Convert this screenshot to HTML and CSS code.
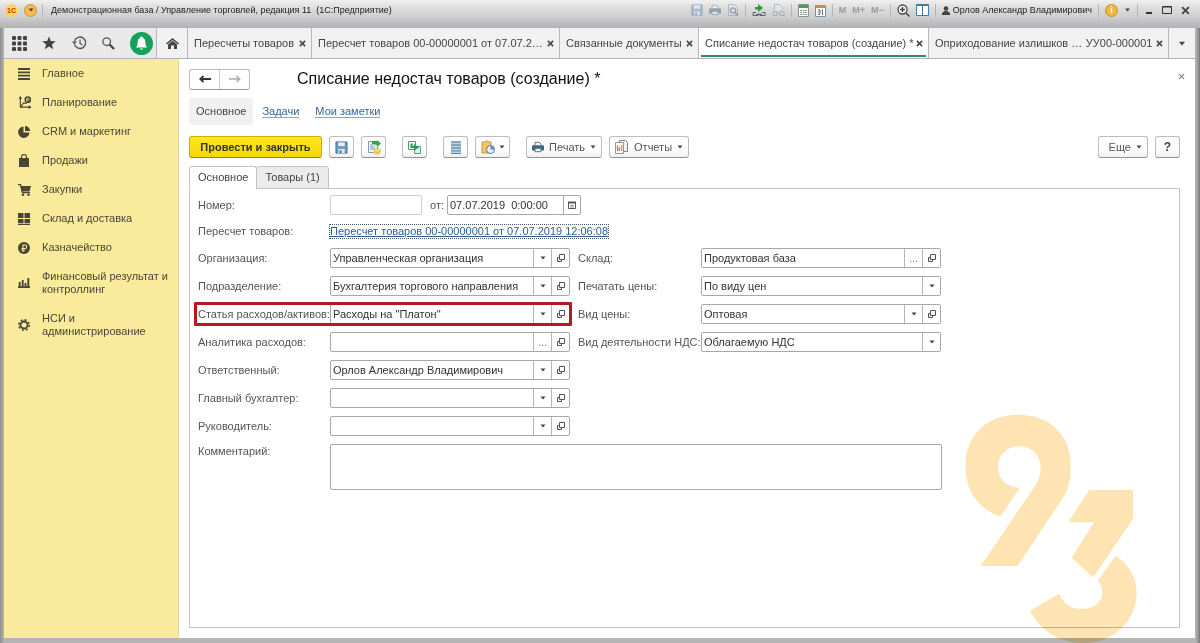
FILE: index.html
```html
<!DOCTYPE html>
<html lang="ru">
<head>
<meta charset="utf-8">
<title>Списание недостач товаров (создание)</title>
<link rel="stylesheet" href="styles.css">
</head>
<body>
<svg class="defs" width="0" height="0" aria-hidden="true">
  <symbol id="i-open" viewBox="0 0 10 10"><path d="M3.500 1.500h5v5h-5zM3.500 4.500h-2v4h4v-2" fill="none" stroke="#555"/></symbol>
  <symbol id="i-down" viewBox="0 0 6 4"><path d="M0.500 0.500h5L3 3.500z" fill="#444"/></symbol>
  <symbol id="i-x" viewBox="0 0 8 8"><path d="M1 1l6 6M7 1l-6 6" stroke="#444" stroke-width="1.700" fill="none"/></symbol>
  <symbol id="i-disk" viewBox="0 0 14 14"><path d="M1 1h12v12H1z" fill="#6f97bd" stroke="#47709a"/><path d="M3.500 1.500h7v4h-7z" fill="#e9f1f8"/><path d="M3.500 8.500h7V13h-7z" fill="#dbe7f1"/><path d="M5 10h2v3H5z" fill="#47709a"/></symbol>
  <symbol id="i-print" viewBox="0 0 14 14"><path d="M3.500 5V1.500h5l2 2V5" fill="#fff" stroke="#41677f"/><path d="M1 5h12a1 1 0 0 1 1 1v5H0V6a1 1 0 0 1 1-1z" fill="#41677f"/><path d="M3.500 8.500h7v4h-7z" fill="#e8f1f6" stroke="#41677f"/></symbol>
</svg>
<div class="window">
  <header class="titlebar">
    <span class="logo">1С</span>
    <button class="round" aria-label="Меню"><svg width="6" height="4"><use href="#i-down"/></svg></button>
    <span class="vline"></span>
    <span class="caption">Демонстрационная база / Управление торговлей, редакция 11&nbsp; (1С:Предприятие)</span>
    <div class="systools">
      <button class="dim" aria-label="Сохранить"><svg width="12" height="12"><use href="#i-disk"/></svg></button>
      <button class="dim" aria-label="Печать"><svg width="12" height="12"><use href="#i-print"/></svg></button>
      <button class="dim" aria-label="Просмотр"><svg width="12" height="12" viewBox="0 0 12 12"><path d="M1.500.5h6l3 3v8h-9z" fill="#e4eaf0" stroke="#7890a4"/><circle cx="6" cy="6.500" r="2.500" fill="none" stroke="#4c687e" stroke-width="1.500"/><path d="M8 8.500l3 3" stroke="#4c687e" stroke-width="2"/></svg></button>
      <span class="vline"></span>
      <button aria-label="Получить ссылку"><svg width="14" height="13" viewBox="0 0 14 13"><path d="M5 3h3V0l5 4-5 4V5.500H5z" fill="#2f9a32" transform="translate(-2 0)"/><path d="M1 8.500h3M10 8.500h3M1 8.500v3h5v-2M13 8.500v3H8v-2M4 10.500h6" fill="none" stroke="#57656f"/></svg></button>
      <button class="dim" aria-label="Перейти"><svg width="13" height="13" viewBox="0 0 13 13"><path d="M2.500 6V.5h5l3 3V6" fill="#eef" stroke="#6c8296"/><path d="M1 7.500h4v4H1zM8 7.500h4v4H8zM5 9.500h3" fill="none" stroke="#6c8296"/></svg></button>
      <span class="vline"></span>
      <button aria-label="Калькулятор"><svg width="11" height="13" viewBox="0 0 11 13"><path d="M.5.500h10v12H.5z" fill="#fff" stroke="#7d9a88"/><path d="M1 1h9v3H1z" fill="#4b9a63"/><path d="M2 6.500h7M2 8.500h7M2 10.500h7" stroke="#8b9a90" stroke-dasharray="2 .5"/></svg></button>
      <button aria-label="Календарь"><svg width="11" height="13" viewBox="0 0 11 13"><path d="M.5 1.500h10v11H.5z" fill="#fff" stroke="#7b8ea3"/><path d="M1 1h9v3H1z" fill="#d28b3c"/><path d="M3 6h2v4M3 8h2M3 10.500h2M7.500 5.500v5.500" fill="none" stroke="#5c7189"/></svg></button>
      <span class="vline"></span>
      <button class="mem">M</button><button class="mem">M+</button><button class="mem">M−</button>
      <span class="vline"></span>
      <button aria-label="Масштаб"><svg width="13" height="13" viewBox="0 0 13 13"><circle cx="5.500" cy="5.500" r="4.500" fill="#fff" stroke="#444" stroke-width="1.300"/><path d="M3 5.500h5M5.500 3v5M9 9l3.500 3.500" stroke="#444" stroke-width="1.500"/></svg></button>
      <button aria-label="Панели"><svg width="13" height="12" viewBox="0 0 13 12"><path d="M.5.500h12v11H.5z" fill="#fff" stroke="#3f7ba8"/><path d="M1 1.500h11M6.500 1v10" stroke="#3f7ba8"/></svg></button>
      <span class="vline"></span>
      <span class="user"><svg width="8" height="9" viewBox="0 0 8 9"><circle cx="4" cy="2.500" r="2.300" fill="#444"/><path d="M0 9V7l2.500-2h3L8 7v2z" fill="#444"/></svg>Орлов Александр Владимирович</span>
      <span class="vline"></span>
      <button class="info" aria-label="Справка">i</button>
      <button aria-label="Ещё"><svg width="7" height="4"><use href="#i-down"/></svg></button>
      <span class="vline"></span>
    </div>
    <div class="winbtns">
      <button aria-label="Свернуть"><svg width="8" height="10"><path d="M1 8h6" stroke="#333" stroke-width="2"/></svg></button>
      <button aria-label="Развернуть"><svg width="10" height="10"><path d="M.5 1.500h9v7h-9zM.5 2h9" fill="none" stroke="#333"/></svg></button>
      <button aria-label="Закрыть окно"><svg width="9" height="9"><use href="#i-x"/></svg></button>
    </div>
  </header>

  <nav class="tabbar">
    <div class="quick">
      <button aria-label="Разделы"><svg width="15" height="15" viewBox="0 0 15 15" fill="#444"><rect width="4" height="4" rx="1"/><rect x="5.500" width="4" height="4" rx="1"/><rect x="11" width="4" height="4" rx="1"/><rect y="5.500" width="4" height="4" rx="1"/><rect x="5.500" y="5.500" width="4" height="4" rx="1"/><rect x="11" y="5.500" width="4" height="4" rx="1"/><rect y="11" width="4" height="4" rx="1"/><rect x="5.500" y="11" width="4" height="4" rx="1"/><rect x="11" y="11" width="4" height="4" rx="1"/></svg></button>
      <button aria-label="Избранное"><svg width="14" height="14" viewBox="0 0 14 14"><path d="M7 .5l1.800 4.600 4.900.2-3.800 3.100 1.300 4.900L7 10.600l-4.200 2.700 1.300-4.900L.3 5.300l4.900-.2z" fill="#444"/></svg></button>
      <button aria-label="История"><svg width="15" height="14" viewBox="0 0 15 14"><path d="M2.500 8.500A5.700 5.700 0 1 0 2.500 5" fill="none" stroke="#555" stroke-width="1.300"/><path d="M0 5.500h5L2.300 8.500z" fill="#555"/><path d="M8 3.500V7.500l2.500 1.500" fill="none" stroke="#555" stroke-width="1.200"/></svg></button>
      <button aria-label="Поиск"><svg width="13" height="13" viewBox="0 0 13 13"><circle cx="4.700" cy="4.700" r="3.800" fill="none" stroke="#555" stroke-width="1.300"/><path d="M7.500 7.500l4.500 4.500" stroke="#444" stroke-width="2.300"/></svg></button>
      <button aria-label="Оповещения"><svg width="23" height="23" viewBox="0 0 23 23"><circle cx="11.500" cy="11.500" r="11.500" fill="#16a05a"/><path d="M11.500 4.500c.8 0 1.200.5 1.200 1.200 2 .8 2.600 2.500 2.700 5 .1 2.200.6 3.300 1.600 4.800H6c1-1.500 1.500-2.600 1.600-4.800.1-2.500.7-4.200 2.700-5 0-.7.400-1.200 1.200-1.200z" fill="#fff"/><path d="M9.800 16.500h3.400c-.3 1.500-3.100 1.500-3.400 0z" fill="#fff"/></svg></button>
    </div>
    <button class="home" aria-label="Начальная страница"><svg width="13" height="11" viewBox="0 0 13 11"><path d="M6.500 0L13 5.500l-1 1L6.500 2 1 6.500l-1-1z" fill="#444"/><path d="M2 6.500l4.500-3.700L11 6.500V11H8V7.500H5V11H2z" fill="#444"/></svg></button>
    <div class="tab t1"><a href="#">Пересчеты товаров</a><button aria-label="Закрыть"><svg width="7" height="7"><use href="#i-x"/></svg></button></div>
    <div class="tab t2"><a href="#">Пересчет товаров 00-00000001 от 07.07.2…</a><button aria-label="Закрыть"><svg width="7" height="7"><use href="#i-x"/></svg></button></div>
    <div class="tab t3"><a href="#">Связанные документы</a><button aria-label="Закрыть"><svg width="7" height="7"><use href="#i-x"/></svg></button></div>
    <div class="tab t4 active"><a href="#">Списание недостач товаров (создание) *</a><button aria-label="Закрыть"><svg width="7" height="7"><use href="#i-x"/></svg></button></div>
    <div class="tab t5"><a href="#">Оприходование излишков …</a><a href="#">УУ00-000001</a><button aria-label="Закрыть"><svg width="7" height="7"><use href="#i-x"/></svg></button></div>
    <button class="more" aria-label="Все вкладки"><svg width="8" height="5"><use href="#i-down"/></svg></button>
  </nav>

  <div class="body">
    <nav class="sections">
      <a href="#"><svg width="12" height="12" viewBox="0 0 12 12"><path d="M0 1h12M0 4.300h12M0 7.600h12M0 11h12" stroke="#4a4636" stroke-width="1.800"/></svg>Главное</a>
      <a href="#"><svg width="14" height="13" viewBox="0 0 14 14"><path d="M2 1v11h11M2.500 11.500l3-4 2.500.5 2-2" fill="none" stroke="#4a4636" stroke-width="1.200"/><path d="M0 3l2-3 2 3zM11 10l3 2-3 2z" fill="#4a4636"/><circle cx="10" cy="4" r="3.600" fill="#4a4636"/><path d="M9 6V2.500h1.500a1 1 0 0 1 0 2H8" fill="none" stroke="#f9e998" stroke-width=".8"/></svg>Планирование</a>
      <a href="#"><svg width="12" height="12" viewBox="0 0 12 12"><path d="M5.500.5V6.500H11.500A5.700 5.700 0 1 1 5.500.5z" fill="#4a4636"/><path d="M7 0a5 5 0 0 1 5 5H7z" fill="#4a4636"/></svg>CRM и маркетинг</a>
      <a href="#"><svg width="12" height="13" viewBox="0 0 12 13"><path d="M1 4h10v9H1z" fill="#4a4636"/><path d="M3.500 6V3a2.500 2.500 0 0 1 5 0v3" fill="none" stroke="#4a4636" stroke-width="1.200"/></svg>Продажи</a>
      <a href="#"><svg width="13" height="12" viewBox="0 0 13 12"><path d="M0 .7h2.500l2 8H12" fill="none" stroke="#4a4636" stroke-width="1.300"/><path d="M2.500 2H13l-1.500 5.500h-8z" fill="#4a4636"/><circle cx="5" cy="10.700" r="1.300" fill="#4a4636"/><circle cx="10.500" cy="10.700" r="1.300" fill="#4a4636"/></svg>Закупки</a>
      <a href="#"><svg width="12" height="12" viewBox="0 0 12 12"><path d="M0 0h5.500v5H0zM6.500 0H12v5H6.500zM0 6h5.500v4H0zM6.500 6H12v4H6.500zM0 10.700h12V12H0z" fill="#4a4636"/></svg>Склад и доставка</a>
      <a href="#"><svg width="12" height="12" viewBox="0 0 12 12"><circle cx="6" cy="6" r="6" fill="#4a4636"/><path d="M5 10V3h2a1.700 1.700 0 0 1 0 3.500H3.500M3.500 8.300H7" fill="none" stroke="#f9e998" stroke-width="1.100"/></svg>Казначейство</a>
      <a href="#"><svg width="12" height="10" viewBox="0 0 12 10"><path d="M0 9.300h12M1.700 9V4M4.700 9V2M7.500 9V5M10.300 9V0" fill="none" stroke="#4a4636" stroke-width="1.900"/></svg>Финансовый результат и контроллинг</a>
      <a href="#"><svg width="12" height="12" viewBox="0 0 12 12"><circle cx="6" cy="6" r="3.500" fill="none" stroke="#4a4636" stroke-width="1.800"/><circle cx="6" cy="6" r="5.200" fill="none" stroke="#4a4636" stroke-width="1.600" stroke-dasharray="2 2.084"/></svg>НСИ и администрирование</a>
    </nav>

    <main class="page">
      <div class="head">
        <div class="navpair">
          <button aria-label="Назад"><svg width="12" height="8" viewBox="0 0 12 8"><path d="M1 4h11M4.500 1L1.300 4l3.200 3" fill="none" stroke="#333" stroke-width="1.800"/></svg></button><button aria-label="Вперед"><svg width="12" height="8" viewBox="0 0 12 8"><path d="M0 4h11M7.500 1l3.200 3-3.200 3" fill="none" stroke="#aaa" stroke-width="1.500"/></svg></button>
        </div>
        <h1>Списание недостач товаров (создание) *</h1>
        <button class="close" aria-label="Закрыть"><svg width="7" height="7" viewBox="0 0 8 8"><path d="M1 1l6 6M7 1l-6 6" stroke="#888" stroke-width="1.400"/></svg></button>
      </div>
      <nav class="links"><span class="here">Основное</span><a href="#">Задачи</a><a href="#">Мои заметки</a></nav>

      <div class="toolbar">
        <button class="btn primary">Провести и закрыть</button>
        <button class="btn icon" aria-label="Записать"><svg width="13" height="13"><use href="#i-disk"/></svg></button>
        <button class="btn icon wide" aria-label="Провести"><svg width="14" height="15" viewBox="0 0 14 15"><path d="M1.500 1.500h9v11h-9z" fill="#eef4fa" stroke="#7f9ab5"/><path d="M3 5h3M3 7h5M3 9h5" stroke="#7f9ab5"/><path d="M5 1h5v-1l4 3.500L10 7V5L5 4z" fill="#2ba84a"/><ellipse cx="10" cy="12.500" rx="3.500" ry="2" fill="#f0cd55"/><ellipse cx="10" cy="10.500" rx="3.500" ry="1.700" fill="#f7df83" stroke="#d2a92f" stroke-width=".6"/></svg></button>
        <button class="btn icon wide" aria-label="Создать на основании"><svg width="15" height="15" viewBox="0 0 15 15"><path d="M1.500 1.500h7v8h-7z" fill="#eaf6ee" stroke="#4f9a73"/><path d="M7.500 6.500h6v7h-6z" fill="#e4f1f4" stroke="#5c90a0"/><path d="M3.500 3.500v4.500h3.500v3l5-3.500L7 4v2H5.500V3.500z" fill="#27a34a"/></svg></button>
        <button class="btn icon" aria-label="Список"><svg width="10" height="13" viewBox="0 0 10 13"><path d="M0 1h10M0 4h10M0 7h10M0 10h10M0 12.500h10" stroke="#5f89ab" stroke-width="1.500"/><path d="M0 2.500h10M0 5.500h10M0 8.500h10M0 11.300h10" stroke="#b9d0e2"/></svg></button>
        <button class="btn split" aria-label="Задачи"><svg width="14" height="14" viewBox="0 0 14 14"><path d="M1 2h3l1-1h2l1 1h2v11H1z" fill="#efc56b" stroke="#c99b3e"/><circle cx="9.500" cy="9.500" r="4" fill="#eaf2fa" stroke="#4d78a3"/><path d="M9.500 6v3.500H13A3.500 3.500 0 0 0 9.500 6z" fill="#5b87b2"/></svg><svg width="6" height="4"><use href="#i-down"/></svg></button>
        <button class="btn named"><svg width="12" height="12"><use href="#i-print"/></svg>Печать<svg class="dd" width="6" height="4"><use href="#i-down"/></svg></button>
        <button class="btn named"><svg width="14" height="14" viewBox="0 0 14 14"><path d="M4.500.5h6l2 2v9h-8z" fill="#eef5ee" stroke="#6b9481"/><path d="M.5 2.500h8v11h-8z" fill="#fff" stroke="#8a9a90"/><path d="M2.500 11V5.500M4.500 11V7.500" stroke="#cc6a4c" stroke-width="1.300"/><path d="M6.700 11V5" stroke="#c7a23e" stroke-width="1.300"/></svg>Отчеты<svg class="dd" width="6" height="4"><use href="#i-down"/></svg></button>
        <button class="btn named end">Еще<svg class="dd" width="6" height="4"><use href="#i-down"/></svg></button>
        <button class="btn icon help">?</button>
      </div>

      <div class="formtabs"><button class="on">Основное</button><button>Товары (1)</button></div>
      <form class="panel">
        <div class="row number">
          <label for="num">Номер:</label><input id="num" class="box pale" type="text">
          <label class="from" for="date">от:</label>
          <div class="box date"><input id="date" type="text" value="07.07.2019  0:00:00"><button type="button" aria-label="Выбрать дату"><svg width="8" height="8" viewBox="0 0 8 8"><path d="M.5 1.500h7v6h-7z" fill="none" stroke="#555"/><path d="M0 1.500h8" stroke="#555" stroke-width="2"/><path d="M2 4.500h4M2 6h4" stroke="#999"/></svg></button></div>
        </div>
        <div class="row linkrow"><span class="lbl">Пересчет товаров:</span><a href="#">Пересчет товаров 00-00000001 от 07.07.2019 12:06:08</a></div>
        <div class="cols">
          <div class="col">
            <div class="row"><label for="org">Организация:</label><div class="box"><select id="org"><option>Управленческая организация</option></select><span class="cell"><svg width="6" height="4"><use href="#i-down"/></svg></span><button type="button" class="cell" aria-label="Открыть"><svg width="10" height="10"><use href="#i-open"/></svg></button></div></div>
            <div class="row"><label for="dep">Подразделение:</label><div class="box"><select id="dep"><option>Бухгалтерия торгового направления</option></select><span class="cell"><svg width="6" height="4"><use href="#i-down"/></svg></span><button type="button" class="cell" aria-label="Открыть"><svg width="10" height="10"><use href="#i-open"/></svg></button></div></div>
            <div class="row marked"><label for="item">Статья расходов/активов:</label><div class="box"><select id="item"><option>Расходы на "Платон"</option></select><span class="cell"><svg width="6" height="4"><use href="#i-down"/></svg></span><button type="button" class="cell" aria-label="Открыть"><svg width="10" height="10"><use href="#i-open"/></svg></button></div></div>
            <div class="row"><label for="an">Аналитика расходов:</label><div class="box"><input id="an" type="text"><button type="button" class="cell dots">...</button><button type="button" class="cell" aria-label="Открыть"><svg width="10" height="10"><use href="#i-open"/></svg></button></div></div>
            <div class="row"><label for="resp">Ответственный:</label><div class="box"><select id="resp"><option>Орлов Александр Владимирович</option></select><span class="cell"><svg width="6" height="4"><use href="#i-down"/></svg></span><button type="button" class="cell" aria-label="Открыть"><svg width="10" height="10"><use href="#i-open"/></svg></button></div></div>
            <div class="row"><label for="acc">Главный бухгалтер:</label><div class="box"><select id="acc"><option></option></select><span class="cell"><svg width="6" height="4"><use href="#i-down"/></svg></span><button type="button" class="cell" aria-label="Открыть"><svg width="10" height="10"><use href="#i-open"/></svg></button></div></div>
            <div class="row"><label for="boss">Руководитель:</label><div class="box"><select id="boss"><option></option></select><span class="cell"><svg width="6" height="4"><use href="#i-down"/></svg></span><button type="button" class="cell" aria-label="Открыть"><svg width="10" height="10"><use href="#i-open"/></svg></button></div></div>
          </div>
          <div class="col second">
            <div class="row"><label for="wh">Склад:</label><div class="box"><input id="wh" type="text" value="Продуктовая база"><button type="button" class="cell dots">...</button><button type="button" class="cell" aria-label="Открыть"><svg width="10" height="10"><use href="#i-open"/></svg></button></div></div>
            <div class="row"><label for="pp">Печатать цены:</label><div class="box"><select id="pp"><option>По виду цен</option></select><span class="cell"><svg width="6" height="4"><use href="#i-down"/></svg></span></div></div>
            <div class="row"><label for="pt">Вид цены:</label><div class="box"><select id="pt"><option>Оптовая</option></select><span class="cell"><svg width="6" height="4"><use href="#i-down"/></svg></span><button type="button" class="cell" aria-label="Открыть"><svg width="10" height="10"><use href="#i-open"/></svg></button></div></div>
            <div class="row"><label for="vat">Вид деятельности НДС:</label><div class="box"><select id="vat"><option>Облагаемую НДС</option></select><span class="cell"><svg width="6" height="4"><use href="#i-down"/></svg></span></div></div>
          </div>
        </div>
        <div class="row comment"><label for="com">Комментарий:</label><textarea id="com" class="box"></textarea></div>
      </form>
    </main>
  </div>
  <svg class="watermark" viewBox="0 0 780 729" aria-hidden="true"><path fill="#fee4b2" d="M181 350C110 325 76 265 76 200C76 105 140 44 235 44C330 44 392 105 392 195C392 240 385 270 368 295L233 498H122L285 258C297 238 302 222 302 204C302 165 274 139 238 139C201 139 174 165 174 202C174 238 200 263 240 263ZM447 270H579V356L460 532L395 474L462 367H385ZM527 467C565 492 590 530 590 577C590 665 520 729 430 729C360 729 300 692 270 632L358 581C370 612 394 627 425 627C460 627 487 608 487 577C487 563 482 552 473 542Z"/></svg>
</div>
</body>
</html>
```
FILE: styles.css
```css
* { box-sizing: border-box; }
body { margin: 0; font: 11px/13px "Liberation Sans", Arial, sans-serif; color: #444; background: #a9a9a9; }
button, input, select, textarea { font: inherit; color: inherit; background: none; border: 0; padding: 0; margin: 0; outline: 0; border-radius: 0; }
button { display: flex; align-items: center; justify-content: center; }
a { color: inherit; text-decoration: none; }
svg { display: block; flex: none; }
.defs { position: absolute; }

.window { position: relative; min-height: 100vh; display: flex; flex-direction: column; padding: 0 5px 5px 4px; background: linear-gradient(90deg, #8c8c8c 0, #b4b4b4 4px, #b4b4b4 calc(100% - 4px), #77797c 100%); }

.titlebar { display: flex; align-items: center; height: 28px; margin: 0 -5px 0 -4px; padding: 0 10px 8px 5px; background: linear-gradient(#f0f0f0, #dcdcdc 30%, #cfcfd0 60%, #b0b1b3); font-size: 9px; color: #222; white-space: nowrap; }
.logo { width: 13px; height: 13px; border-radius: 7px; background: #fbd65a; color: #c8261c; font-size: 7px; font-weight: bold; text-align: center; }
.round { width: 13px; height: 13px; margin-left: 6px; border-radius: 7px; background: #f7ba4c; border: 1px solid #cc9145; }
.vline { width: 1px; height: 13px; background: #b5b5b5; }
.round + .vline { margin-left: 5px; }
.caption { margin-left: 8px; }
.systools { display: flex; align-items: center; gap: 6px; margin-left: auto; }
.dim { opacity: .45; }
.mem { color: #999; font-weight: bold; }
.user { display: flex; align-items: center; gap: 3px; }
.info { width: 13px; height: 13px; border-radius: 7px; background: #efb93f; border: 1px solid #c58f25; color: #fff; font-weight: bold; }
.winbtns { display: flex; align-items: center; gap: 9px; margin-left: 7px; }

.tabbar { display: flex; height: 31px; background: #f1f1f1; border-bottom: 1px solid #b3b3b3; white-space: nowrap; }
.quick { display: flex; align-items: center; justify-content: space-between; width: 153px; padding: 0 3px 0 8px; background: #e9e9e9; border-right: 1px solid #b8b8b8; }
.home { width: 31px; border-right: 1px solid #b8b8b8; }
.tab { display: flex; align-items: center; justify-content: space-between; min-width: 0; padding: 0 5px 0 6px; border-right: 1px solid #b8b8b8; }
.t1 { flex: 112 1 0; }
.t2 { flex: 236 1 0; }
.t3 { flex: 127 1 0; }
.t4 { flex: 218 1 0; }
.t5 { flex: 228 1 0; }
.active { background: #fff linear-gradient(#2f8f62, #2f8f62) 2px 27px / calc(100% - 4px) 2px no-repeat; }
.more { width: 26px; }

.body { flex: 1; display: flex; background: #fff; }
.sections { width: 175px; background: #f9eb9b; border-right: 1px solid #ddd5a8; color: #4a4636; }
.sections a { display: grid; grid-template-columns: 24px 1fr; align-items: center; padding: 8px 4px 8px 14px; }

.page { flex: 1; min-width: 0; display: flex; flex-direction: column; padding: 9px 15px 10px 10px; }
.head { display: flex; align-items: center; height: 22px; }
.navpair { display: flex; width: 61px; height: 21px; border: 1px solid #bcbcbc; border-bottom-color: #999; border-radius: 3px; }
.navpair button { flex: 1; }
.navpair button + button { border-left: 1px solid #ccc; }
h1 { margin: 0 auto 0 47px; font-size: 16px; line-height: 20px; font-weight: normal; color: #111; }
.close { align-self: flex-start; width: 7px; height: 16px; margin-right: -5px; }
.links { display: flex; align-items: center; gap: 16px; margin-top: 8px; color: #3a6590; }
.links a { border-bottom: 1px solid #8ba6c0; line-height: 12px; }
.here { margin-right: -7px; padding: 7px; background: #f1f1f1; border-radius: 3px; color: #444; }

.toolbar { display: flex; margin-top: 11px; gap: 7px; }
.btn { height: 22px; border: 1px solid #bdbdbd; border-bottom-color: #929292; border-radius: 3px; background: linear-gradient(#fff 60%, #f0f0f0); }
.primary { width: 133px; border-color: #c9ae00; border-bottom-color: #9a8500; background: linear-gradient(#ffe81f, #f3d700); font-weight: bold; color: #333; }
.icon { width: 25px; }
.wide { margin-right: 9px; }
.split { width: 35px; gap: 4px; margin-right: 9px; }
.named { gap: 5px; padding: 0 5px; color: #555; }
.end { margin-left: auto; padding-left: 10px; }
.help { font-weight: bold; font-size: 12px; }

.formtabs { display: flex; margin-top: 8px; margin-bottom: -1px; }
.formtabs button { position: relative; height: 23px; padding: 0 8px; border: 1px solid #c4c4c4; border-radius: 3px 3px 0 0; background: #ebebeb; }
.formtabs .on { background: #fff; border-bottom-color: #fff; }
.formtabs button + button { margin-left: -1px; }
.panel { flex: 1; display: flex; flex-direction: column; padding: 6px 8px; border: 1px solid #c4c4c4; }
.row { display: flex; align-items: center; }
.row label, .lbl { width: 132px; flex: none; color: #555; white-space: nowrap; }
.box { display: flex; width: 240px; height: 20px; border: 1px solid #a8a8a8; border-radius: 2px; background: #fff; color: #333; }
.box input, .box select { flex: 1; min-width: 0; padding: 0 2px; appearance: none; }
.cell { display: flex; align-items: center; justify-content: center; width: 18px; border-left: 1px solid #b5b5b5; }
.dots { color: #888; }
.number .pale { width: 92px; border-color: #ccc; }
.number .from { width: 17px; margin-left: 8px; }
.date { width: 134px; }
.date button { width: 17px; border-left: 1px solid #a8a8a8; }
.linkrow { height: 33px; }
.linkrow a { color: #2f5f94; text-decoration: underline; outline: 1px dotted #456; white-space: nowrap; }
.cols { display: flex; align-items: flex-start; gap: 8px; }
.col { display: flex; flex-direction: column; gap: 8px; }
.second .row label { width: 123px; }
.marked { position: relative; }
.marked::after { content: ""; position: absolute; inset: -2px -2px -2px -4px; border: 3px solid #b5191f; border-radius: 1px; pointer-events: none; }
.comment { align-items: flex-start; margin-top: 8px; }
.comment label { padding-top: 1px; }
.comment .box { width: 612px; height: 46px; resize: none; }

.watermark { position: absolute; right: 0; bottom: 0; width: 260px; height: 243px; mix-blend-mode: multiply; pointer-events: none; }
```
